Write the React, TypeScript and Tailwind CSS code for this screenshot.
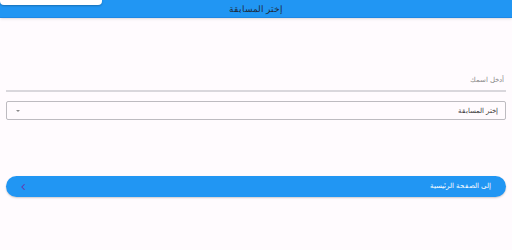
import { ChevronLeft } from 'lucide-react';

export default function App() {
  return (
    <div
      dir="rtl"
      className="relative w-[512px] h-[250px] bg-[#fffbfe] overflow-hidden"
      style={{ fontFamily: '"Noto Sans", "Liberation Sans", sans-serif' }}
    >
      <header className="h-[18px] bg-[#2196f3] border-b border-[#1e88e5] flex items-center justify-center shadow-sm">
        <span className="text-[9px] leading-none text-[#1f2a3a]">إختر المسابقة</span>
      </header>

      <div className="absolute left-0 top-0 w-[102px] h-[5px] bg-white rounded-b-[4px] shadow-[0_1px_2px_rgba(0,0,0,0.25)]" />

      <div className="px-[6px] pt-[58px]">
        <div className="h-[16px] border-b-2 border-[#d9d7dc] flex items-start pt-[1px] pr-[2px]">
          <span className="text-[6.5px] text-[#8a8a8a] leading-none">أدخل اسمك</span>
        </div>

        <div className="mt-[9px] h-[19px] border border-[#bdbbc0] rounded-[2px] flex items-center justify-between px-[7px]">
          <span className="text-[7px] text-[#3a3a3a] leading-none">إختر المسابقة</span>
          <span className="w-0 h-0 border-l-[2px] border-r-[2px] border-t-[2px] border-l-transparent border-r-transparent border-t-[#8a8a8a] ml-[2px]" />
        </div>

        <button className="mt-[56px] w-full h-[21px] rounded-full bg-[#2196f3] flex items-center justify-between pr-[15px] pl-[12px] shadow-[0_1px_2px_rgba(0,0,0,0.2)]">
          <span className="text-[6.8px] text-white leading-none">إلى الصفحة الرئيسية</span>
          <ChevronLeft className="w-[10px] h-[10px] text-[#6a32a8]" strokeWidth={2.5} />
        </button>
      </div>
    </div>
  );
}
